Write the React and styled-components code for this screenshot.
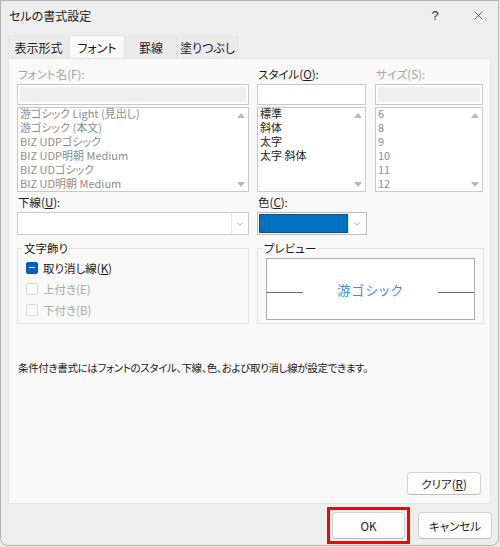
import React from 'react';
import styled, { createGlobalStyle } from 'styled-components';
import { X, ChevronDown } from 'lucide-react';

const GlobalStyle = createGlobalStyle`
  html, body {
    margin: 0;
    padding: 0;
    background: #e9e9e9;
  }
  body {
    font-family: "Noto Sans CJK JP", "Noto Sans", sans-serif;
    font-feature-settings: "palt";
    font-size: 12px;
    color: #1b1b1b;
  }
`;

const Window = styled.div`
  box-sizing: border-box;
  width: 499px;
  height: 546px;
  background: #eeeeee;
  border: 1px solid #b4b4b4;
  border-radius: 0 0 8px 8px;
  display: flex;
  flex-direction: column;
`;

const TitleBar = styled.div`
  height: 29px;
  display: flex;
  align-items: center;
  padding-left: 8px;
  font-size: 12px;
`;

const Title = styled.div`
  flex: 1;
`;

const TitleButton = styled.div`
  width: ${({ w }) => w}px;
  height: 29px;
  display: flex;
  align-items: center;
  justify-content: center;
  font-size: 13px;
  color: #333;
  font-family: "Liberation Sans", sans-serif;
`;

const Tabs = styled.div`
  display: flex;
  margin: 6px 0 0 7px;
  height: 22px;
  position: relative;
  z-index: 1;
`;

const Tab = styled.div`
  box-sizing: border-box;
  width: ${({ w }) => w}px;
  height: ${({ active }) => (active ? 23 : 22)}px;
  display: flex;
  align-items: center;
  justify-content: center;
  font-size: 12px;
  background: ${({ active }) => (active ? '#f9f9f9' : '#ebebeb')};
  border: 1px solid ${({ active }) => (active ? '#e3e3e3' : '#e6e6e6')};
  border-bottom: none;
  margin-top: ${({ active }) => (active ? -1 : 0)}px;
  color: #1b1b1b;
`;

const Panel = styled.div`
  box-sizing: border-box;
  margin: 0 7px 0 7px;
  height: 446px;
  background: #f9f9f9;
  border: 1px solid #e3e3e3;
  padding: 8px 9px 8px 8px;
  display: flex;
  flex-direction: column;
`;

const TopGrid = styled.div`
  display: grid;
  grid-template-columns: 232px 109px 109px;
  column-gap: 8px;
  & > :nth-child(3) {
    margin-left: 1px;
  }
`;

const Field = styled.div`
  display: flex;
  flex-direction: column;
`;

const Label = styled.div`
  height: 14px;
  line-height: 14px;
  font-size: 11.5px;
  padding-left: 1px;
  margin-bottom: 3px;
  color: ${({ disabled }) => (disabled ? '#a3a3a3' : '#1b1b1b')};
`;

const TextBox = styled.div`
  box-sizing: border-box;
  height: 21px;
  border: 1px solid #c9c9c9;
  background: ${({ disabled }) => (disabled ? '#efefef' : '#ffffff')};
  ${({ disabled }) => disabled && 'box-shadow: inset 0 0 0 2px #ffffff;'}
  margin-bottom: 2px;
`;

const ListBox = styled.div`
  box-sizing: border-box;
  height: 85px;
  border: 1px solid #c9c9c9;
  background: #ffffff;
  display: flex;
  overflow: hidden;
`;

const Items = styled.div`
  flex: 1;
  padding: 0 2px;
  margin-top: -2px;
`;

const Item = styled.div`
  height: 14px;
  line-height: 14px;
  font-size: 11px;
  white-space: nowrap;
  color: ${({ disabled }) => (disabled ? '#8d8d8d' : '#1b1b1b')};
`;

const ScrollBar = styled.div`
  width: 15px;
  display: flex;
  flex-direction: column;
  justify-content: space-between;
  align-items: center;
  padding: 5px 0 4px;
`;

const Arrow = styled.div`
  width: 0;
  height: 0;
  border-left: 4px solid transparent;
  border-right: 4px solid transparent;
  ${({ down }) =>
    down ? 'border-top: 5px solid #b8b8b8;' : 'border-bottom: 5px solid #b8b8b8;'}
`;

const MidRow = styled.div`
  display: grid;
  grid-template-columns: 232px 110px;
  column-gap: 8px;
  margin-top: 3px;
`;

const Combo = styled.div`
  box-sizing: border-box;
  height: 23px;
  border: 1px solid ${({ dark }) => (dark ? '#bdbdbd' : '#c9c9c9')};
  background: #ffffff;
  display: flex;
  padding: ${({ dark }) => (dark ? '1px' : '0')};
`;

const ComboValue = styled.div`
  flex: 1;
  background: ${({ color }) => color || '#ffffff'};
  border: ${({ color }) => (color ? '1px solid #1e4f7c' : 'none')};
`;

const DropButton = styled.div`
  width: 16px;
  display: flex;
  align-items: center;
  justify-content: center;
  border-left: 1px solid #e6e6e6;
  color: #606060;
`;

const GroupRow = styled.div`
  display: grid;
  grid-template-columns: 232px 227px;
  column-gap: 8px;
  margin-top: 6px;
`;

const Group = styled.fieldset`
  box-sizing: border-box;
  height: 83px;
  margin: 0;
  border: 1px solid #e2e2e2;
  padding: 2px 8px 0 8px;
  min-width: 0;
`;

const Legend = styled.legend`
  font-size: 11.5px;
  padding: 0 1px;
  margin-left: -3px;
  line-height: 14px;
`;

const CheckRow = styled.div`
  display: flex;
  align-items: center;
  height: 21px;
  gap: 5px;
  font-size: 11.5px;
  color: ${({ disabled }) => (disabled ? '#a8a8a8' : '#1b1b1b')};
`;

const Box = styled.div`
  box-sizing: border-box;
  width: 12px;
  height: 12px;
  border-radius: 2px;
  border: 1px solid ${({ on }) => (on ? '#005fb8' : '#d6d6d6')};
  background: ${({ on }) => (on ? '#005fb8' : '#fbfbfb')};
  display: flex;
  align-items: center;
  justify-content: center;
  &::after {
    content: '';
    display: ${({ on }) => (on ? 'block' : 'none')};
    width: 6px;
    height: 1.5px;
    background: #ffffff;
  }
`;

const PreviewBox = styled.div`
  box-sizing: border-box;
  height: 62px;
  margin-top: 1px;
  background: #ffffff;
  border: 1px solid #ababab;
  display: flex;
  align-items: center;
`;

const Line = styled.div`
  width: 36px;
  height: 1px;
  background: #6a6a6a;
  margin-top: 7px;
`;

const Sample = styled.div`
  flex: 1;
  text-align: center;
  color: #3d8fd6;
  font-size: 13px;
  letter-spacing: 1.5px;
`;

const Note = styled.div`
  margin-top: 36px;
  padding-left: 1px;
  font-size: 10.5px;
  letter-spacing: -0.35px;
  color: #1b1b1b;
`;

const Spacer = styled.div`
  flex: 1;
`;

const ButtonRow = styled.div`
  display: flex;
  justify-content: flex-end;
  align-items: center;
  gap: ${({ gap }) => gap || 0}px;
`;

const Button = styled.div`
  box-sizing: border-box;
  width: ${({ w }) => w || 74}px;
  height: ${({ h }) => h || 23}px;
  background: #fdfdfd;
  border: 1px solid #d0d0d0;
  border-bottom-color: #bdbdbd;
  border-radius: 4px;
  display: flex;
  align-items: center;
  justify-content: center;
  font-size: 11.5px;
  color: #1b1b1b;
`;

const Highlight = styled.div`
  box-sizing: border-box;
  padding: 2px;
  border: 3px solid #ff0000;
  display: flex;
`;

const Footer = styled.div`
  padding: 3px 6px 0 0;
`;

const U = styled.span`
  text-decoration: underline;
`;

const fontNames = [
  '游ゴシック Light (見出し)',
  '游ゴシック (本文)',
  'BIZ UDPゴシック',
  'BIZ UDP明朝 Medium',
  'BIZ UDゴシック',
  'BIZ UD明朝 Medium',
];
const styles = ['標準', '斜体', '太字', '太字 斜体'];
const sizes = ['6', '8', '9', '10', '11', '12'];

const List = ({ items, disabled }) => (
  <ListBox>
    <Items>
      {items.map((t) => (
        <Item key={t} disabled={disabled}>
          {t}
        </Item>
      ))}
    </Items>
    <ScrollBar>
      <Arrow />
      <Arrow down />
    </ScrollBar>
  </ListBox>
);

export default function App() {
  return (
    <>
      <GlobalStyle />
      <Window>
        <TitleBar>
          <Title>セルの書式設定</Title>
          <TitleButton w={46}>?</TitleButton>
          <TitleButton w={40}>
            <X size={15} strokeWidth={1.2} />
          </TitleButton>
        </TitleBar>
        <Tabs>
          <Tab w={61}>表示形式</Tab>
          <Tab w={56} active>
            フォント
          </Tab>
          <Tab w={52}>罫線</Tab>
          <Tab w={61}>塗りつぶし</Tab>
        </Tabs>
        <Panel>
          <TopGrid>
            <Field>
              <Label disabled>フォント名(F):</Label>
              <TextBox disabled />
              <List items={fontNames} disabled />
            </Field>
            <Field>
              <Label>
                スタイル(<U>O</U>):
              </Label>
              <TextBox />
              <List items={styles} />
            </Field>
            <Field>
              <Label disabled>サイズ(S):</Label>
              <TextBox disabled />
              <List items={sizes} disabled />
            </Field>
          </TopGrid>
          <MidRow>
            <Field>
              <Label>
                下線(<U>U</U>):
              </Label>
              <Combo>
                <ComboValue />
                <DropButton>
                  <ChevronDown size={10} strokeWidth={1.3} />
                </DropButton>
              </Combo>
            </Field>
            <Field>
              <Label>
                色(<U>C</U>):
              </Label>
              <Combo dark>
                <ComboValue color="#0070c0" />
                <DropButton>
                  <ChevronDown size={10} strokeWidth={1.3} />
                </DropButton>
              </Combo>
            </Field>
          </MidRow>
          <GroupRow>
            <Group>
              <Legend>文字飾り</Legend>
              <CheckRow>
                <Box on />
                <span>
                  取り消し線(<U>K</U>)
                </span>
              </CheckRow>
              <CheckRow disabled>
                <Box />
                <span>上付き(E)</span>
              </CheckRow>
              <CheckRow disabled>
                <Box />
                <span>下付き(B)</span>
              </CheckRow>
            </Group>
            <Group>
              <Legend>プレビュー</Legend>
              <PreviewBox>
                <Line />
                <Sample>游ゴシック</Sample>
                <Line />
              </PreviewBox>
            </Group>
          </GroupRow>
          <Note>条件付き書式にはフォントのスタイル、下線、色、および取り消し線が設定できます。</Note>
          <Spacer />
          <ButtonRow>
            <Button w={74}>
              <span>
                クリア(<U>R</U>)
              </span>
            </Button>
          </ButtonRow>
        </Panel>
        <Footer>
          <ButtonRow gap={8}>
            <Highlight>
              <Button w={73} h={27}>
                OK
              </Button>
            </Highlight>
            <Button w={74} h={27}>
              キャンセル
            </Button>
          </ButtonRow>
        </Footer>
      </Window>
    </>
  );
}
